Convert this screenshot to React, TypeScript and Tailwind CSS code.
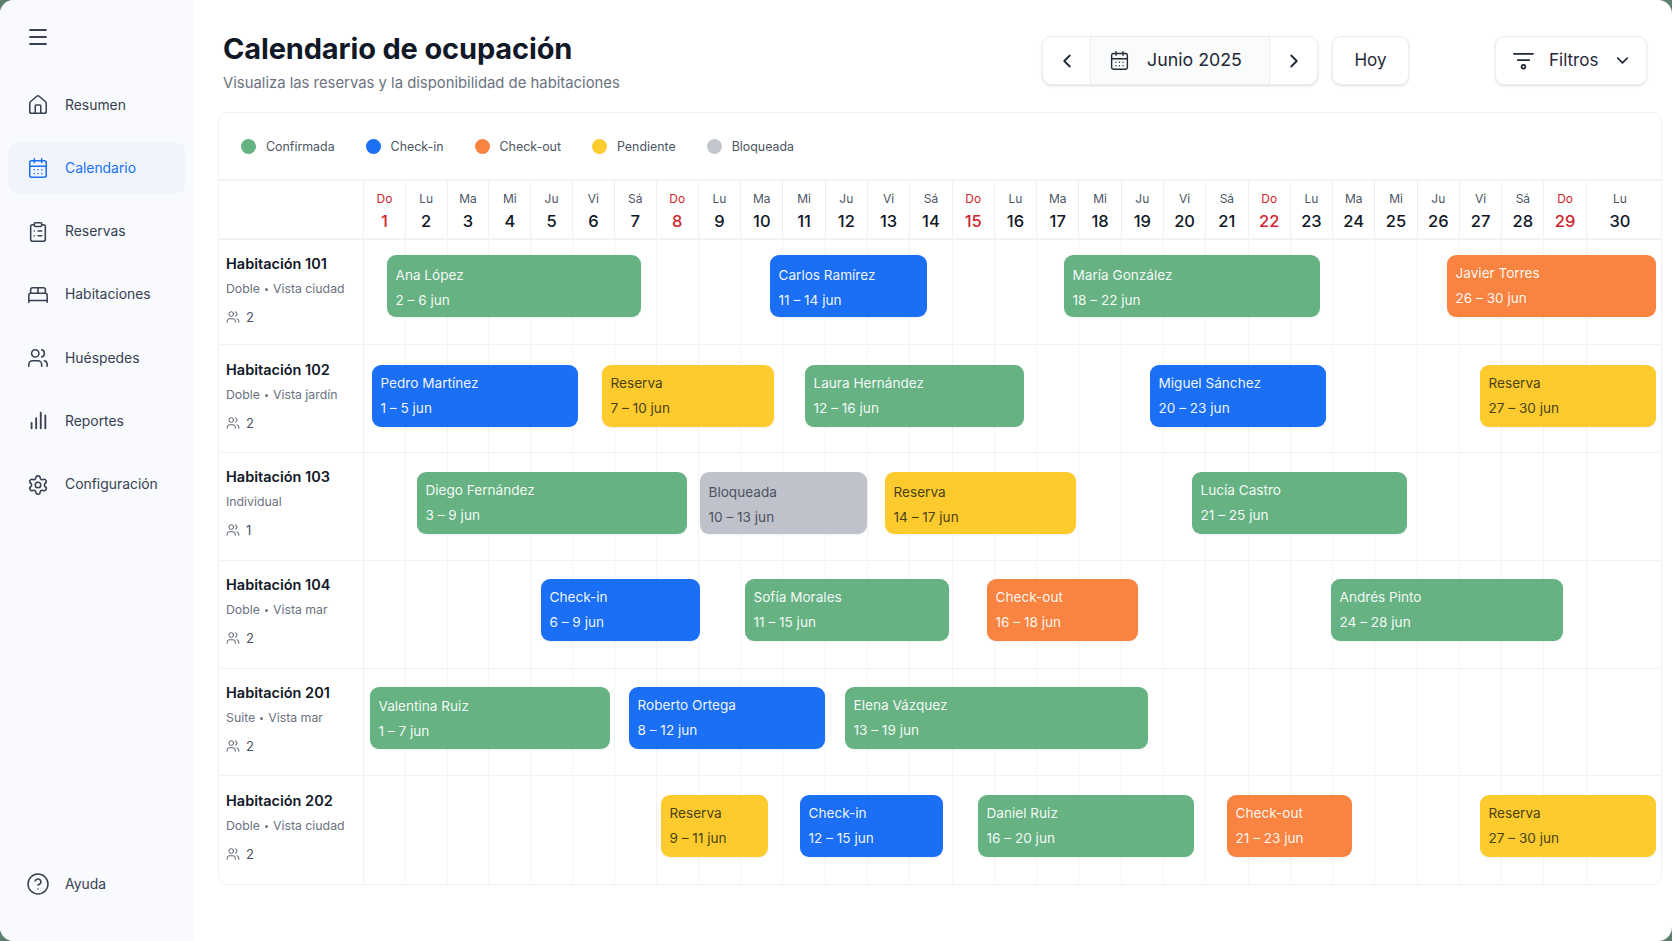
import { Menu, House, CalendarDays, ClipboardList, BedDouble, Users, Settings, CircleHelp, ChevronLeft, ChevronRight, ChevronDown } from "lucide-react";

const TRACK_X = 364;

function BarsIcon({ className }: { className?: string }) {
  return (
    <svg viewBox="0 0 24 24" fill="none" stroke="currentColor" strokeWidth="2" strokeLinecap="round" className={className}>
      <path d="M5 20v-6M10 20V9M15 20V3M20 20V6" />
    </svg>
  );
}

function FilterIcon({ className }: { className?: string }) {
  return (
    <svg viewBox="0 0 24 24" fill="none" stroke="currentColor" strokeWidth="1.8" strokeLinecap="round" className={className}>
      <path d="M2 5h20M6 11.5h12" />
      <circle cx="12" cy="18.5" r="2" />
    </svg>
  );
}

const nav = [
  { label: "Resumen", Icon: House },
  { label: "Calendario", Icon: CalendarDays, active: true },
  { label: "Reservas", Icon: ClipboardList },
  { label: "Habitaciones", Icon: BedDouble },
  { label: "Huéspedes", Icon: Users },
  { label: "Reportes", Icon: BarsIcon },
  { label: "Configuración", Icon: Settings },
];

const legend = [
  { label: "Confirmada", dot: "bg-[#66b283]" },
  { label: "Check-in", dot: "bg-[#1a6ff5]" },
  { label: "Check-out", dot: "bg-[#f98340]" },
  { label: "Pendiente", dot: "bg-[#fecb2f]" },
  { label: "Bloqueada", dot: "bg-[#c3c6ce]" },
];

const dayNames = ["Do", "Lu", "Ma", "Mi", "Ju", "Vi", "Sá"];
const days = Array.from({ length: 30 }, (_, i) => ({ n: i + 1, name: dayNames[i % 7], sunday: i % 7 === 0 }));

const kinds = {
  green: "bg-[#66b283] text-white/95",
  blue: "bg-[#1a6ff5] text-white/95",
  orange: "bg-[#f98340] text-white/95",
  yellow: "bg-[#fecb2f] text-[#4a4215]",
  gray: "bg-[#bfc2cb] text-[#4b5260]",
};

type Kind = keyof typeof kinds;
type Bar = { name: string; dates: string; kind: Kind; x1: number; x2: number; dy?: number };

const rooms: { name: string; sub: string[]; cap: number; height: number; barTop: number; labelTop: number; bars: Bar[] }[] = [
  {
    name: "Habitación 101", sub: ["Doble", "Vista ciudad"], cap: 2, height: 105, barTop: 15, labelTop: 14,
    bars: [
      { name: "Ana López", dates: "2 – 6 jun", kind: "green", x1: 387, x2: 641, dy: 2 },
      { name: "Carlos Ramírez", dates: "11 – 14 jun", kind: "blue", x1: 770, x2: 927, dy: 2 },
      { name: "María González", dates: "18 – 22 jun", kind: "green", x1: 1064, x2: 1320, dy: 2 },
      { name: "Javier Torres", dates: "26 – 30 jun", kind: "orange", x1: 1447, x2: 1656 },
    ],
  },
  {
    name: "Habitación 102", sub: ["Doble", "Vista jardín"], cap: 2, height: 108, barTop: 20, labelTop: 15,
    bars: [
      { name: "Pedro Martínez", dates: "1 – 5 jun", kind: "blue", x1: 372, x2: 578 },
      { name: "Reserva", dates: "7 – 10 jun", kind: "yellow", x1: 602, x2: 774 },
      { name: "Laura Hernández", dates: "12 – 16 jun", kind: "green", x1: 805, x2: 1024 },
      { name: "Miguel Sánchez", dates: "20 – 23 jun", kind: "blue", x1: 1150, x2: 1326 },
      { name: "Reserva", dates: "27 – 30 jun", kind: "yellow", x1: 1480, x2: 1656 },
    ],
  },
  {
    name: "Habitación 103", sub: ["Individual"], cap: 1, height: 108, barTop: 19, labelTop: 14,
    bars: [
      { name: "Diego Fernández", dates: "3 – 9 jun", kind: "green", x1: 417, x2: 687 },
      { name: "Bloqueada", dates: "10 – 13 jun", kind: "gray", x1: 700, x2: 867, dy: 2 },
      { name: "Reserva", dates: "14 – 17 jun", kind: "yellow", x1: 885, x2: 1076, dy: 2 },
      { name: "Lucía Castro", dates: "21 – 25 jun", kind: "green", x1: 1192, x2: 1407 },
    ],
  },
  {
    name: "Habitación 104", sub: ["Doble", "Vista mar"], cap: 2, height: 108, barTop: 18, labelTop: 14,
    bars: [
      { name: "Check-in", dates: "6 – 9 jun", kind: "blue", x1: 541, x2: 700 },
      { name: "Sofía Morales", dates: "11 – 15 jun", kind: "green", x1: 745, x2: 949 },
      { name: "Check-out", dates: "16 – 18 jun", kind: "orange", x1: 987, x2: 1138 },
      { name: "Andrés Pinto", dates: "24 – 28 jun", kind: "green", x1: 1331, x2: 1563 },
    ],
  },
  {
    name: "Habitación 201", sub: ["Suite", "Vista mar"], cap: 2, height: 107, barTop: 18, labelTop: 14,
    bars: [
      { name: "Valentina Ruiz", dates: "1 – 7 jun", kind: "green", x1: 370, x2: 610, dy: 1 },
      { name: "Roberto Ortega", dates: "8 – 12 jun", kind: "blue", x1: 629, x2: 825 },
      { name: "Elena Vázquez", dates: "13 – 19 jun", kind: "green", x1: 845, x2: 1148 },
    ],
  },
  {
    name: "Habitación 202", sub: ["Doble", "Vista ciudad"], cap: 2, height: 108, barTop: 19, labelTop: 15,
    bars: [
      { name: "Reserva", dates: "9 – 11 jun", kind: "yellow", x1: 661, x2: 768 },
      { name: "Check-in", dates: "12 – 15 jun", kind: "blue", x1: 800, x2: 943 },
      { name: "Daniel Ruiz", dates: "16 – 20 jun", kind: "green", x1: 978, x2: 1194 },
      { name: "Check-out", dates: "21 – 23 jun", kind: "orange", x1: 1227, x2: 1352 },
      { name: "Reserva", dates: "27 – 30 jun", kind: "yellow", x1: 1480, x2: 1656 },
    ],
  },
];

function Sidebar() {
  return (
    <aside className="w-[194px] shrink-0 bg-[#f8fafd] flex flex-col px-[8px] pb-[45px]">
      <div className="h-[79px] pl-[18px] pt-[25px] text-[#374151]">
        <Menu className="w-[24px] h-[24px]" strokeWidth={1.8} />
      </div>
      <nav className="flex flex-col gap-[11.3px]">
        {nav.map(({ label, Icon, active }) => (
          <div
            key={label}
            className={`h-[52px] w-[177px] flex items-center gap-[16px] pl-[19px] rounded-[10px] text-[13.9px] ${active ? "bg-[#f0f5fd] text-[#1a6ff5]" : "text-[#374151]"}`}
          >
            <Icon className="w-[22px] h-[22px] shrink-0" strokeWidth={1.7} />
            <span>{label}</span>
          </div>
        ))}
      </nav>
      <div className="mt-auto flex items-center gap-[15px] pl-[18px] text-[13.9px] text-[#374151]">
        <CircleHelp className="w-[24px] h-[24px] shrink-0" strokeWidth={1.5} />
        <span>Ayuda</span>
      </div>
    </aside>
  );
}

function Header() {
  return (
    <header className="h-[82px] flex items-start pr-[15px]">
      <div className="flex-1 pl-[5px]">
        <h1 className="text-[29px] leading-[38px] font-bold text-[#111827] tracking-[-0.15px]">Calendario de ocupación</h1>
        <p className="mt-[5px] text-[14.85px] leading-[20px] text-[#6b7280]">Visualiza las reservas y la disponibilidad de habitaciones</p>
      </div>
      <div className="mt-[6px] flex h-[49px] w-[276px] rounded-[9px] border border-[#eceef1] bg-white shadow-sm text-[#1f2937]">
        <div className="w-[47px] flex items-center justify-center">
          <ChevronLeft className="w-[22px] h-[22px]" strokeWidth={2} />
        </div>
        <div className="flex-1 flex items-center gap-[17px] pl-[18px] bg-[#fafbfb] border-x border-[#eceef1]">
          <CalendarDays className="w-[21px] h-[21px]" strokeWidth={1.6} />
          <span className="text-[17.8px]">Junio 2025</span>
        </div>
        <div className="w-[47px] flex items-center justify-center">
          <ChevronRight className="w-[22px] h-[22px]" strokeWidth={2} />
        </div>
      </div>
      <div className="mt-[6px] ml-[14px] h-[49px] w-[77px] flex items-center justify-center rounded-[9px] border border-[#eceef1] bg-white shadow-sm text-[17px] text-[#1f2937]">
        Hoy
      </div>
      <div className="mt-[6px] ml-[86px] h-[49px] w-[152px] flex items-center pl-[16px] gap-[14px] rounded-[9px] border border-[#eceef1] bg-white shadow-sm text-[17px] text-[#1f2937]">
        <FilterIcon className="w-[23px] h-[23px]" />
        <span>Filtros</span>
        <ChevronDown className="ml-[1px] w-[19px] h-[19px]" strokeWidth={2} />
      </div>
    </header>
  );
}

function Legend() {
  return (
    <div className="h-[68px] flex items-center pl-[22px] pt-[2px] gap-[31px] border-b-2 border-[#f1f2f4]">
      {legend.map((l) => (
        <div key={l.label} className="flex items-center gap-[10px] text-[12.4px] text-[#4b5563]">
          <span className={`w-[15px] h-[15px] rounded-full ${l.dot}`} />
          {l.label}
        </div>
      ))}
    </div>
  );
}

function DayHeader() {
  return (
    <div className="h-[59px] flex border-b-2 border-[#f1f2f4]">
      <div className="w-[145px] shrink-0 border-r border-[#eff0f2]" />
      <div className="flex-1 grid grid-cols-[repeat(7,41.8px)_repeat(22,42.29px)_1fr]">
        {days.map((d) => (
          <div
            key={d.n}
            className={`flex flex-col items-center pt-[10px] border-r border-[#eff0f2] last:border-r-0 last:pr-[8px] ${d.sunday ? "text-[#d0262d]" : "text-[#1f2937]"}`}
          >
            <span className={`text-[12px] leading-[16px] ${d.sunday ? "" : "text-[#4b5563]"}`}>{d.name}</span>
            <span className={`mt-[3px] text-[16.5px] leading-[22px] font-[450] ${d.sunday ? "" : "text-[#111827]"}`}>{d.n}</span>
          </div>
        ))}
      </div>
    </div>
  );
}

function RoomRow({ room, isLast }: { room: (typeof rooms)[number]; isLast: boolean }) {
  return (
    <div className={`flex ${isLast ? "" : "border-b border-[#f0f1f3]"}`} style={{ height: room.height }}>
      <div className="w-[145px] shrink-0 border-r border-[#eff0f2] pl-[7px]" style={{ paddingTop: room.labelTop }}>
        <div className="text-[14.5px] leading-[20px] font-semibold text-[#111827]">{room.name}</div>
        <div className="mt-[5px] text-[12.3px] leading-[20px] text-[#6b7280] flex items-center gap-[5px]">
          {room.sub.map((s, i) => (
            <span key={s} className="flex items-center gap-[5px]">
              {i > 0 && <span className="w-[3px] h-[3px] rounded-full bg-[#6b7280]" />}
              {s}
            </span>
          ))}
        </div>
        <div className="mt-[8px] flex items-center gap-[6px] text-[13px] leading-[20px] text-[#4b5563]">
          <Users className="w-[14px] h-[14px]" strokeWidth={1.6} />
          {room.cap}
        </div>
      </div>
      <div className="relative flex-1">
        <div className="absolute inset-0 grid grid-cols-[repeat(7,41.8px)_repeat(22,42.29px)_1fr]">
          {days.map((d) => (
            <div key={d.n} className="border-r border-[#f3f4f6] last:border-r-0" />
          ))}
        </div>
        {room.bars.map((b) => (
          <div
            key={b.name + b.x1}
            className={`absolute h-[62px] rounded-[9px] pl-[8.5px] text-[13.6px] leading-[25px] shadow-[0_1px_2px_rgba(0,0,0,0.06)] ${kinds[b.kind]}`}
            style={{ left: b.x1 - TRACK_X, width: b.x2 - b.x1, top: room.barTop, paddingTop: 6 + (b.dy ?? 0) }}
          >
            <div>{b.name}</div>
            <div>{b.dates}</div>
          </div>
        ))}
      </div>
    </div>
  );
}

export default function App() {
  return (
    <div className="h-screen bg-[#5f7f6e] font-['Inter',sans-serif]">
      <div className="h-full flex rounded-[14px] overflow-hidden bg-white">
        <Sidebar />
        <main className="flex-1 flex flex-col pt-[30px] pl-[24px] pr-[10px] min-w-0">
          <Header />
          <section className="w-[1444px] rounded-[9px] border border-[#eef0f2] bg-white overflow-hidden">
            <Legend />
            <DayHeader />
            {rooms.map((r, i) => (
              <RoomRow key={r.name} room={r} isLast={i === rooms.length - 1} />
            ))}
          </section>
        </main>
      </div>
    </div>
  );
}
